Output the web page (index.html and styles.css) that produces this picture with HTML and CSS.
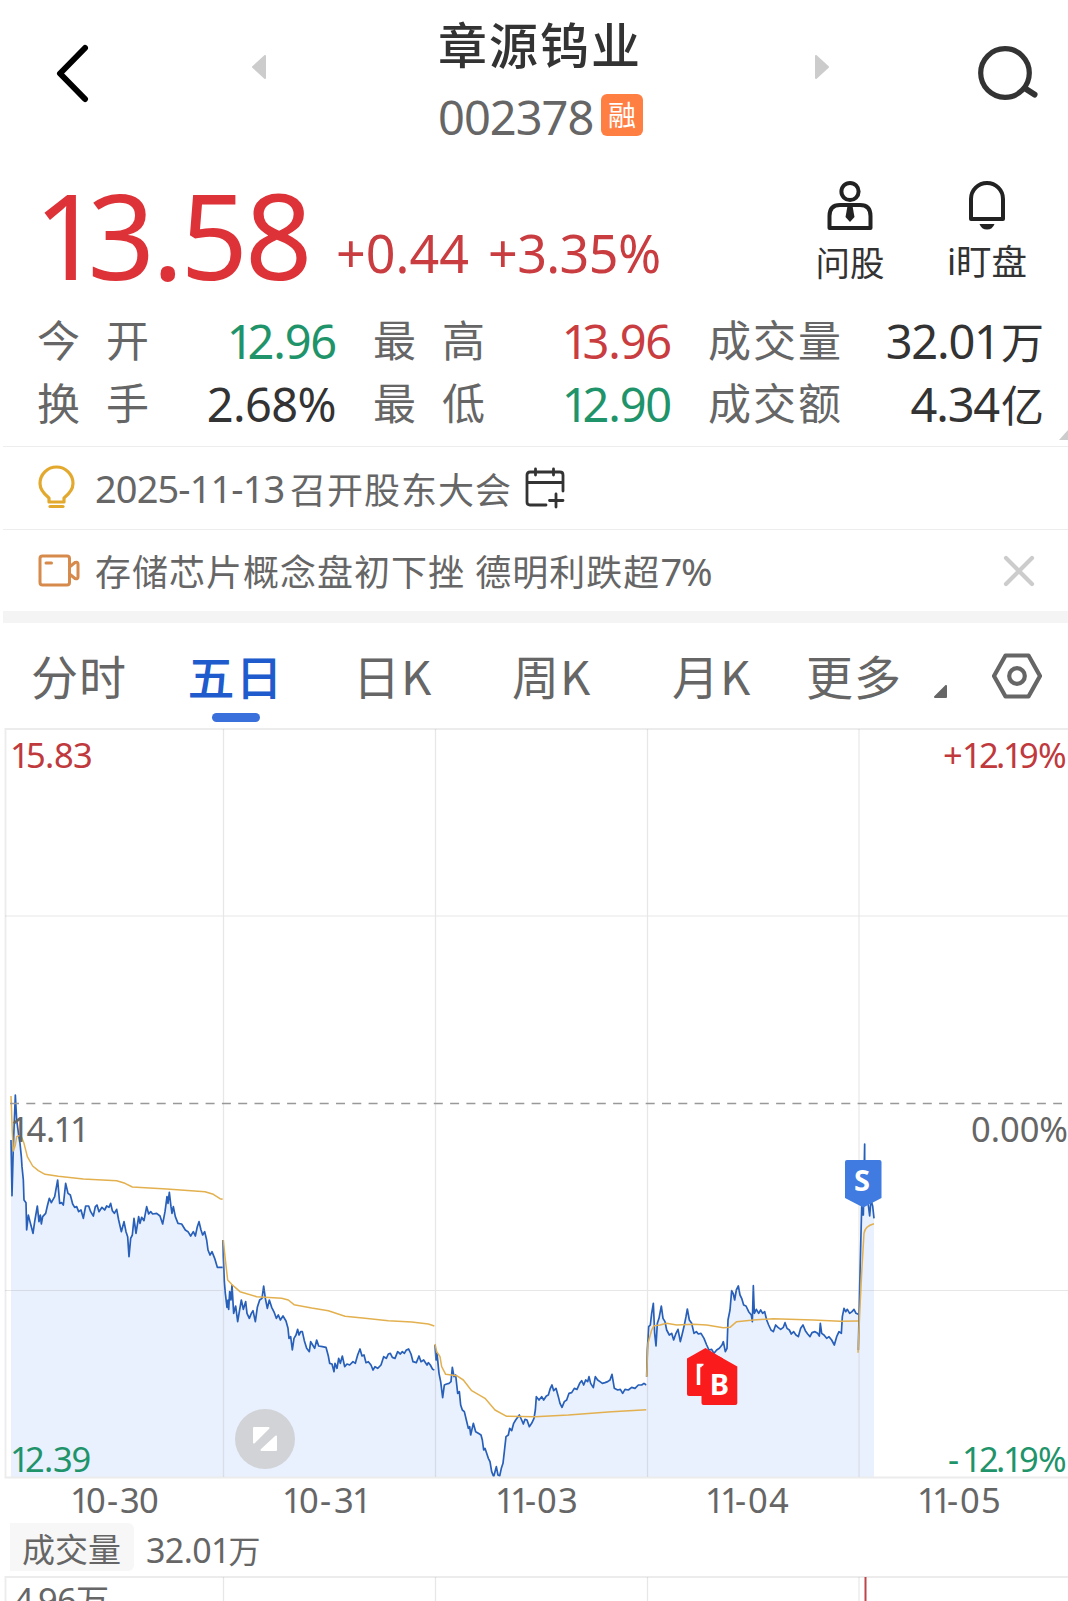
FILE: index.html
```html
<!DOCTYPE html>
<html lang="zh-CN">
<head>
<meta charset="utf-8">
<title>章源钨业 002378</title>
<link rel="stylesheet" href="styles.css">
</head>
<body>
<header class="topbar">
  <svg class="back" width="34" height="60" viewBox="0 0 34 60"><path d="M29 5 4 30.500 29 56" fill="none" stroke="#000" stroke-width="6" stroke-linecap="round" stroke-linejoin="round"/></svg>
  <svg class="prev" width="14" height="24" viewBox="0 0 14 24"><path d="M13 1v22L1 12z" fill="#ccc" stroke="#ccc" stroke-width="2" stroke-linejoin="round"/></svg>
  <div class="stock">
    <h1 class="name">章源钨业</h1>
    <div class="code"><span class="code-num">002378</span><span class="badge">融</span></div>
  </div>
  <svg class="next" width="14" height="24" viewBox="0 0 14 24"><path d="M1 1v22l12-11z" fill="#ccc" stroke="#ccc" stroke-width="2" stroke-linejoin="round"/></svg>
  <svg class="search" width="62" height="58" viewBox="0 0 62 58" fill="none" stroke="#333" stroke-linecap="round"><circle cx="28" cy="29" r="24.300" stroke-width="5.200"/><path d="m49 45 8.500 5.500" stroke-width="6"/></svg>
</header>

<section class="quote">
  <div class="price"><u>1</u>3.58</div>
  <div class="change">+0.44</div>
  <div class="change percent">+3.35%</div>
  <div class="actions">
    <div class="action">
      <svg width="46" height="50" viewBox="0 0 46 50"><g fill="none" stroke="#222" stroke-width="4"><circle cx="23" cy="11.500" r="8.600"/><path d="M13 25h20q10.500 0 10.500 11v12h-41V36Q2.500 25 13 25Z" stroke-linejoin="round"/></g><path d="M20.500 26h5l2 11-4.500 5-4.500-5z" fill="#222"/></svg>
      <span>问股</span>
    </div>
    <div class="action watch">
      <svg width="38" height="50" viewBox="0 0 38 50"><path d="M3 39V19a16 16 0 0 1 32 0v20z" fill="none" stroke="#222" stroke-width="4" stroke-linejoin="round"/><path d="M11.500 44h15q-2 5.500-7.500 5.500T11.500 44Z" fill="#222"/></svg>
      <span>i盯盘</span>
    </div>
  </div>
</section>

<section class="stats">
  <div class="stat"><span class="label"><i>今</i><i>开</i></span><span class="num down"><u>1</u>2.96</span></div>
  <div class="stat"><span class="label"><i>最</i><i>高</i></span><span class="num up"><u>1</u>3.96</span></div>
  <div class="stat"><span class="label"><i>成</i><i>交</i><i>量</i></span><span class="num">32.0<u>1</u><b>万</b></span></div>
  <div class="stat"><span class="label"><i>换</i><i>手</i></span><span class="num pct">2.68%</span></div>
  <div class="stat"><span class="label"><i>最</i><i>低</i></span><span class="num down"><u>1</u>2.90</span></div>
  <div class="stat"><span class="label"><i>成</i><i>交</i><i>额</i></span><span class="num">4.34<b>亿</b></span></div>
  <svg class="more-corner" width="9" height="10" viewBox="0 0 9 10"><path d="M9 0v10H0z" fill="#ccc"/></svg>
</section>

<section class="notice">
  <svg width="42" height="46" viewBox="0 0 42 46" fill="none" stroke="#e2a92e" stroke-width="3.200"><path d="M13 37v-4c-5-4-9-8-9-14.500a16.500 16.500 0 0 1 33 0C37 25 33 29 28 33v4z" stroke-linejoin="round"/><path d="M14 41.500h13" stroke-linecap="round"/></svg>
  <span class="date">2025-11-13</span><span class="msg">召开股东大会</span>
  <svg class="calendar" width="40" height="42" viewBox="0 0 40 42" fill="none" stroke="#333" stroke-width="2.800" stroke-linecap="round"><path d="M38 24V8q0-3-3-3H5Q2 5 2 8v27q0 3 3 3h16M2 15.500h36M10.500 2v6M28.500 2v6M31 27v13M24.500 33.500h13.500"/></svg>
</section>
<section class="notice news">
  <svg width="42" height="34" viewBox="0 0 42 34" fill="none" stroke="#d68a4c" stroke-width="3" stroke-linejoin="round"><rect x="2" y="2" width="29.500" height="29" rx="2.500"/><path d="M31.500 13 37 8.500q3-1 3 1.500v13q0 2.500-3 1.500L31.500 20M8 9h5.500" stroke-linecap="round"/></svg>
  <span class="msg">存储芯片概念盘初下挫 德明利跌超<em>7%</em></span>
  <svg class="close" width="32" height="32" viewBox="0 0 32 32"><path d="m3 3 26 26M29 3 3 29" stroke="#ccc" stroke-width="4.200" stroke-linecap="round"/></svg>
</section>

<nav class="tabs">
  <span class="tab">分时</span>
  <span class="tab active">五日</span>
  <span class="tab k">日K</span>
  <span class="tab k">周K</span>
  <span class="tab k">月K</span>
  <span class="tab">更多</span>
  <svg class="drop" width="13" height="13" viewBox="0 0 13 13"><path d="M12 1v11H1z" fill="#666" stroke="#666" stroke-width="2" stroke-linejoin="round"/></svg>
  <svg class="gear" width="50" height="46" viewBox="0 0 50 46" fill="none" stroke="#666" stroke-width="4.200"><path d="M13.500 2.500h23L48 23 36.500 43.500h-23L2 23z" stroke-linejoin="round"/><circle cx="25" cy="23" r="7.800"/></svg>
</nav>

<svg class="chart" width="1068" height="790" viewBox="0 728 1068 790">
  <g class="series" transform="translate(0 1080) scale(.33333)">
    <path class="area" d="M33 1193V180L36 347 40 200 46 45 50 120 56 165 60 190 64 230 66 260 70 300 72 360 78 368 80 450 85 405 90 425 94 440 99 460 104 425 112 378 117 425 121 405 124 432 128 410 137 400 142 378 148 355 154 368 164 350 173 300 179 370 185 368 190 375 197 310 204 340 211 345 218 372 224 382 230 380 236 395 243 390 250 415 257 378 266 378 272 395 280 408 286 380 291 375 297 395 306 382 314 390 320 378 327 382 332 370 337 392 343 400 350 388 356 420 364 455 372 425 378 455 383 470 387 530 392 475 397 465 402 415 408 460 416 410 420 430 425 412 432 422 440 380 446 402 452 395 458 402 470 400 480 408 488 432 495 395 501 350 504 370 508 337 513 380 516 400 520 380 526 410 534 430 545 432 556 450 564 455 572 468 580 455 586 468 592 440 597 425 603 450 608 465 614 455 620 480 624 510 630 525 636 515 644 535 652 562H670V1193Z"/>
    <path class="line" d="M33 180 36 347 40 200 46 45 50 120 56 165 60 190 64 230 66 260 70 300 72 360 78 368 80 450 85 405 90 425 94 440 99 460 104 425 112 378 117 425 121 405 124 432 128 410 137 400 142 378 148 355 154 368 164 350 173 300 179 370 185 368 190 375 197 310 204 340 211 345 218 372 224 382 230 380 236 395 243 390 250 415 257 378 266 378 272 395 280 408 286 380 291 375 297 395 306 382 314 390 320 378 327 382 332 370 337 392 343 400 350 388 356 420 364 455 372 425 378 455 383 470 387 530 392 475 397 465 402 415 408 460 416 410 420 430 425 412 432 422 440 380 446 402 452 395 458 402 470 400 480 408 488 432 495 395 501 350 504 370 508 337 513 380 516 400 520 380 526 410 534 430 545 432 556 450 564 455 572 468 580 455 586 468 592 440 597 425 603 450 608 465 614 455 620 480 624 510 630 525 636 515 644 535 652 562H668"/>
    <path class="avg" d="M33 48 37 160 40 213 46 195 50 170 62 165 72 190 82 230 98 258 115 272 135 283 175 289 250 297 350 302 375 310 397 321 500 327 615 335 640 343 660 356 668 358"/>
  </g>
  <g class="series" transform="translate(215 1220) scale(.33333)">
    <path class="area" d="M25 773V110L28 185 31 220 36 262 39 240 41 268 44 215 48 240 51 195 56 280 62 258 68 305 73 275 79 240 85 268 92 245 96 280 103 295 109 280 114 272 121 305 127 262 134 240 141 235 146 198 151 235 157 265 163 240 170 262 178 278 184 295 190 285 196 300 204 288 213 303 219 325 222 355 227 350 232 390 237 355 243 345 248 328 252 345 257 335 262 335 268 362 275 385 283 395 287 365 293 375 299 385 305 360 311 378 322 380 333 382 340 408 344 430 351 432 357 455 360 430 366 445 371 415 376 430 382 408 389 440 396 432 404 435 414 425 421 430 428 405 435 387 441 408 447 405 453 428 460 425 468 435 474 450 480 440 488 445 498 435 506 410 514 415 520 402 526 400 532 412 540 415 548 395 556 402 562 395 568 400 574 390 581 387 588 402 594 425 604 428 612 408 618 425 626 420 636 435 640 428 646 435 653 448 660 450V773Z"/>
    <path class="line" d="M24 60 25 110 28 185 31 220 36 262 39 240 41 268 44 215 48 240 51 195 56 280 62 258 68 305 73 275 79 240 85 268 92 245 96 280 103 295 109 280 114 272 121 305 127 262 134 240 141 235 146 198 151 235 157 265 163 240 170 262 178 278 184 295 190 285 196 300 204 288 213 303 219 325 222 355 227 350 232 390 237 355 243 345 248 328 252 345 257 335 262 335 268 362 275 385 283 395 287 365 293 375 299 385 305 360 311 378 322 380 333 382 340 408 344 430 351 432 357 455 360 430 366 445 371 415 376 430 382 408 389 440 396 432 404 435 414 425 421 430 428 405 435 387 441 408 447 405 453 428 460 425 468 435 474 450 480 440 488 445 498 435 506 410 514 415 520 402 526 400 532 412 540 415 548 395 556 402 562 395 568 400 574 390 581 387 588 402 594 425 604 428 612 408 618 425 626 420 636 435 640 428 646 435 653 448 658 450"/>
    <path class="avg" d="M25 60 30 110 38 180 50 193 75 215 125 230 200 235 220 240 237 254 290 264 340 272 390 289 450 295 520 302 590 306 640 312 658 318"/>
  </g>
  <g class="series" transform="translate(425 1320) scale(.33333)">
    <path class="area" d="M30 473V75L33 120 36 100 42 160 47 185 53 233 58 195 65 192 72 190 78 185 82 142 87 170 92 165 98 220 103 215 107 255 112 270 118 275 124 300 130 325 134 320 137 345 145 310 152 335 160 340 168 345 172 360 176 390 180 385 185 400 190 415 195 425 200 455 206 470 214 440 219 465 224 468 229 445 234 430 238 395 243 350 250 345 254 325 260 332 266 310 272 300 283 285 290 300 295 312 300 298 306 300 313 320 320 310 327 295 331 270 334 230 342 240 350 230 356 240 364 228 370 225 376 205 381 195 386 212 393 205 400 230 405 250 411 262 418 245 425 240 432 220 440 218 448 205 456 208 464 190 470 182 476 195 482 180 488 185 492 170 497 190 505 203 511 170 518 180 525 185 532 190 540 188 548 185 555 180 561 163 568 205 578 210 586 208 593 220 600 208 610 210 620 202 630 205 640 195 650 195 657 190 666 195V473Z"/>
    <path class="line" d="M30 75 33 120 36 100 42 160 47 185 53 233 58 195 65 192 72 190 78 185 82 142 87 170 92 165 98 220 103 215 107 255 112 270 118 275 124 300 130 325 134 320 137 345 145 310 152 335 160 340 168 345 172 360 176 390 180 385 185 400 190 415 195 425 200 455 206 470 214 440 219 465 224 468 229 445 234 430 238 395 243 350 250 345 254 325 260 332 266 310 272 300 283 285 290 300 295 312 300 298 306 300 313 320 320 310 327 295 331 270 334 230 342 240 350 230 356 240 364 228 370 225 376 205 381 195 386 212 393 205 400 230 405 250 411 262 418 245 425 240 432 220 440 218 448 205 456 208 464 190 470 182 476 195 482 180 488 185 492 170 497 190 505 203 511 170 518 180 525 185 532 190 540 188 548 185 555 180 561 163 568 205 578 210 586 208 593 220 600 208 610 210 620 202 630 205 640 195 650 195 657 190 664 195"/>
    <path class="avg" d="M30 72 35 95 45 110 50 140 62 163 95 167 115 180 140 212 180 235 210 270 245 289 330 290 430 285 560 275 664 269"/>
  </g>
  <g class="series" transform="translate(640 1270) scale(.33333)">
    <path class="area" d="M20 623V320L22 240 26 170 31 165 35 130 40 100 44 190 48 228 52 160 57 145 64 108 69 145 75 155 80 180 88 195 95 190 101 210 108 190 114 178 121 215 126 195 133 165 138 140 142 117 148 150 155 160 162 190 169 185 175 192 183 190 192 205 200 225 207 240 215 238 222 250 230 240 238 235 246 225 250 215 256 245 261 235 264 150 270 120 275 62 280 72 284 90 289 60 295 48 300 75 305 85 311 105 318 108 326 125 334 135 337 155 340 47 343 130 349 118 356 130 362 120 368 130 374 125 380 150 386 165 393 180 400 185 407 165 414 172 422 178 430 172 435 158 441 175 448 180 454 192 461 185 468 195 475 200 482 175 489 165 496 182 503 192 510 200 516 188 525 185 533 190 538 198 541 160 545 190 552 195 560 205 567 200 575 210 583 225 590 200 597 185 604 190 607 140 612 115 617 125 622 118 629 130 636 125 642 118 648 130 656 133V623Z"/>
    <path class="line" d="M20 320 22 240 26 170 31 165 35 130 40 100 44 190 48 228 52 160 57 145 64 108 69 145 75 155 80 180 88 195 95 190 101 210 108 190 114 178 121 215 126 195 133 165 138 140 142 117 148 150 155 160 162 190 169 185 175 192 183 190 192 205 200 225 207 240 215 238 222 250 230 240 238 235 246 225 250 215 256 245 261 235 264 150 270 120 275 62 280 72 284 90 289 60 295 48 300 75 305 85 311 105 318 108 326 125 334 135 337 155 340 47 343 130 349 118 356 130 362 120 368 130 374 125 380 150 386 165 393 180 400 185 407 165 414 172 422 178 430 172 435 158 441 175 448 180 454 192 461 185 468 195 475 200 482 175 489 165 496 182 503 192 510 200 516 188 525 185 533 190 538 198 541 160 545 190 552 195 560 205 567 200 575 210 583 225 590 200 597 185 604 190 607 140 612 115 617 125 622 118 629 130 636 125 642 118 648 130 655 133"/>
    <path class="avg" d="M20 320 24 220 35 180 42 167 60 165 80 160 110 165 160 163 200 165 250 173 270 172 290 155 340 150 400 146 520 150 600 154 655 153"/>
  </g>
  <g class="series" transform="translate(800 1120) scale(.33333)">
    <path class="area" d="M176 1073V690L179 500 185 260 190 285 194 240 205 255 209 288 213 240 218 258 222 295V1073Z"/>
    <path class="line" d="M175 690 179 500 185 260 187 285 190 285 194 72V240L205 255 209 288 213 240 218 258 222 295"/>
    <path class="avg" d="M174 698 180 560 186 440 192 340Q195 318 222 311"/>
  </g>
  <g class="grid">
    <path d="M4.500 729H1068M4.500 1477.500H1068M5.500 729v748"/>
    <path class="thin" d="M5 916H1068M5 1290.500H1068M223.500 729v748M435.500 729v748M647.500 729v748M859 729v748"/>
    <path class="base" d="M10 1103.500H1062"/>
  </g>
  <g class="axis">
    <text class="up" x="10 26 45 54 73" y="767.500">15.83</text>
    <text class="up" x="943 962 979 996 1003 1019 1038" y="767.500">+12.19%</text>
    <text x="10 26.500 46 53.500 70" y="1141.500">14.11</text>
    <text x="971" y="1141.500" textLength="97">0.00%</text>
    <text class="down" x="10 25 44 53 71.500" y="1471.500">12.39</text>
    <text class="down" x="948 962 979 996 1003 1019 1038" y="1471.500">-12.19%</text>
    <text x="70 86 107 120 139" y="1512.500">10-30</text>
    <text x="282 299 320 334 352" y="1512.500">10-31</text>
    <text x="495 510 525 537 558" y="1512.500">11-03</text>
    <text x="705 720 735 748 769" y="1512.500">11-04</text>
    <text x="917 932 947 960 981" y="1512.500">11-05</text>
  </g>
  <g class="marker">
    <path d="M847 1160h32.500q2 0 2 2v36l-18.200 9.500-18.300-9.500v-36q0-2 2-2z" fill="#3f7be0"/>
    <text x="862" y="1190.500" text-anchor="middle">S</text>
    <path d="M687 1358.500 705.500 1348 723 1358.500V1396h-34q-2 0-2-2z" fill="#fa1c1c"/>
    <path d="M698.500 1385v-19.500h5" fill="none" stroke="#fff" stroke-width="3.500"/>
    <path d="M701.500 1366.500 719.500 1356.500 737.300 1366.500v36.500q0 2-2 2h-31.800q-2 0-2-2z" fill="#fa1c1c"/>
    <text x="719.500" y="1394.500" text-anchor="middle">B</text>
  </g>
  <g class="expand">
    <circle cx="265" cy="1439" r="30" fill="#d2d3d6"/>
    <path d="M254 1428h14.500l-14.500 14.500zM276 1436.500V1450h-14.500z" fill="#fff" stroke="#fff" stroke-width="2" stroke-linejoin="round"/>
  </g>
</svg>

<div class="indicator"><span class="chip">成交量</span><span class="volume">32.0<u>1</u><b>万</b></span></div>
<svg class="volume-chart" width="1068" height="26" viewBox="0 1575 1068 26">
  <g class="grid"><path d="M4.500 1577H1068M5.500 1577v24"/><path class="thin" d="M223.500 1577v24M435.500 1577v24M647.500 1577v24M859 1577v24"/></g>
  <path d="M865.500 1577v24" stroke="#bd4449" stroke-width="2"/>
  <g class="axis"><text x="14 31 38 57" y="1613">4.96</text><text x="76" y="1613" font-size="33">万</text></g>
</svg>
</body>
</html>
```
FILE: styles.css
```css
* { box-sizing: border-box; }
body {
  margin: 0;
  width: 1068px;
  height: 1601px;
  overflow: hidden;
  background: #fff;
  color: #333;
  font-family: "Noto Sans", "Noto Sans CJK SC", sans-serif;
}
svg { display: block; flex: none; }
i, em { font-style: normal; }
b { font-weight: 400; letter-spacing: 0; }
u { text-decoration: none; }
.up { color: #c93c40; fill: #c0393d; }
.down { color: #1f946a; fill: #1f946a; }

.topbar { display: flex; align-items: flex-start; height: 150px; padding-left: 56px; }
.back { margin-top: 43px; }
.prev { margin: 55px 0 0 162px; }
.stock { width: 549px; height: 150px; padding: 17px 0 0 172px; }
.name { margin: 0; font-size: 49px; font-weight: 500; line-height: 56px; letter-spacing: 2px; white-space: nowrap; }
.code { display: flex; align-items: center; height: 68px; margin-top: 8px; }
.code-num { width: 163px; padding-top: 4px; font-size: 47px; line-height: 68px; letter-spacing: -1px; color: #666; }
.badge { width: 42px; height: 42px; border-radius: 6px; background: #ff7f43; color: #fff; font-size: 28px; line-height: 42px; text-align: center; }
.next { margin-top: 55px; }
.search { margin: 44px 0 0 148px; }

.quote { display: flex; align-items: flex-start; height: 158px; padding: 25px 0 0 36px; }
.price { width: 302px; margin-left: -2px; padding-top: 1px; font-size: 118px; line-height: 118px; letter-spacing: -3px; color: #dd3237; }
.price u { letter-spacing: -14px; }
.change { width: 152px; margin-top: 48px; font-size: 52px; line-height: 60px; letter-spacing: 0; color: #c93c40; }
.percent { width: 327px; letter-spacing: -.600px; }
.actions { display: flex; gap: 62px; padding-top: 5px; }
.action { display: flex; flex-direction: column; align-items: center; width: 70px; font-size: 34.500px; line-height: 44px; white-space: nowrap; }
.action span { margin-top: 11px; }
.watch { width: 80px; font-size: 35.500px; }
.watch span { margin-top: 9px; }

.stats { position: relative; display: grid; grid-template-columns: 299px 298px 336px; grid-template-rows: 63px 63px; column-gap: 37px; height: 138px; padding: 1px 0 0 37px; }
.stat { display: flex; justify-content: space-between; line-height: 63px; }
.label { display: flex; justify-content: space-between; width: 112px; font-size: 43px; color: #666; }
.stat:nth-child(3n) .label { width: 133px; }
.num { padding-top: 1px; font-size: 47px; letter-spacing: -1.200px; }
.num u { letter-spacing: -6px; }
.num b + b, .num u + b { margin-left: 6px; }
.num b { font-size: 43px; margin-left: 2px; }
.pct { letter-spacing: -.600px; }
.more-corner { position: absolute; right: 0; top: 122px; }

.notice { display: flex; align-items: center; height: 83px; margin-left: 3px; padding-left: 33px; border-top: 1px solid #ededed; color: #666; font-size: 36px; }
.date { width: 195px; margin-left: 17px; font-size: 38px; letter-spacing: -.900px; white-space: nowrap; }
.msg { letter-spacing: 1px; }
.calendar { margin-left: 13px; }
.news { height: 82px; padding-left: 34.500px; }
.news .msg { width: 893px; margin-left: 15.500px; white-space: pre; }
.news em { font-size: 38px; letter-spacing: -1px; }
.close { margin-left: 15px; }

.tabs { display: grid; grid-template-columns: 157.500px 164.500px 159px 160px 134px 128px 58px 50px; height: 117px; margin-left: 3px; padding-left: 28px; border-top: 12px solid #f4f4f4; color: #666; font-size: 47px; line-height: 104px; letter-spacing: 1px; }
.tab { padding-top: 2px; white-space: nowrap; }
.tab.k { padding-top: 0; font-family: "Noto Sans CJK SC", sans-serif; }
.active { display: flex; flex-direction: column; width: 94px; align-items: center; color: #205bcd; font-weight: 500; }
.active::after { content: ""; flex: none; width: 48px; height: 9px; margin-top: -16px; border-radius: 5px; background: #3a70dc; }
.drop { margin-top: 62px; }
.gear { margin-top: 30px; }

.chart, .volume-chart { overflow: visible; }
.area { fill: #e9f0fe; }
.line { fill: none; stroke: #2860b9; stroke-width: 1.700; vector-effect: non-scaling-stroke; stroke-linejoin: round; }
.avg { fill: none; stroke: #e3b04f; stroke-width: 1.500; vector-effect: non-scaling-stroke; stroke-linejoin: round; }
.grid { fill: none; stroke: #ececec; stroke-width: 1.800; }
.thin { stroke: #999; stroke-opacity: .24; stroke-width: 1.200; }
.base { stroke: #999; stroke-width: 1.400; stroke-dasharray: 9 7.300; }
.axis { font-size: 34.500px; fill: #666; }
.marker { font: 700 29px "Noto Sans", sans-serif; fill: #fff; }

.indicator { display: flex; align-items: center; height: 57px; padding-left: 10px; color: #666; font-size: 34px; }
.chip { width: 124px; height: 48px; padding-left: 12px; border-radius: 0 6px 6px 0; background: #f7f7f7; font-size: 33px; line-height: 53px; }
.volume { margin-left: 12px; padding-top: 5px; letter-spacing: -.600px; }
.volume u { letter-spacing: -4px; }
.volume b { font-size: 32px; margin-left: 2px; }
```
